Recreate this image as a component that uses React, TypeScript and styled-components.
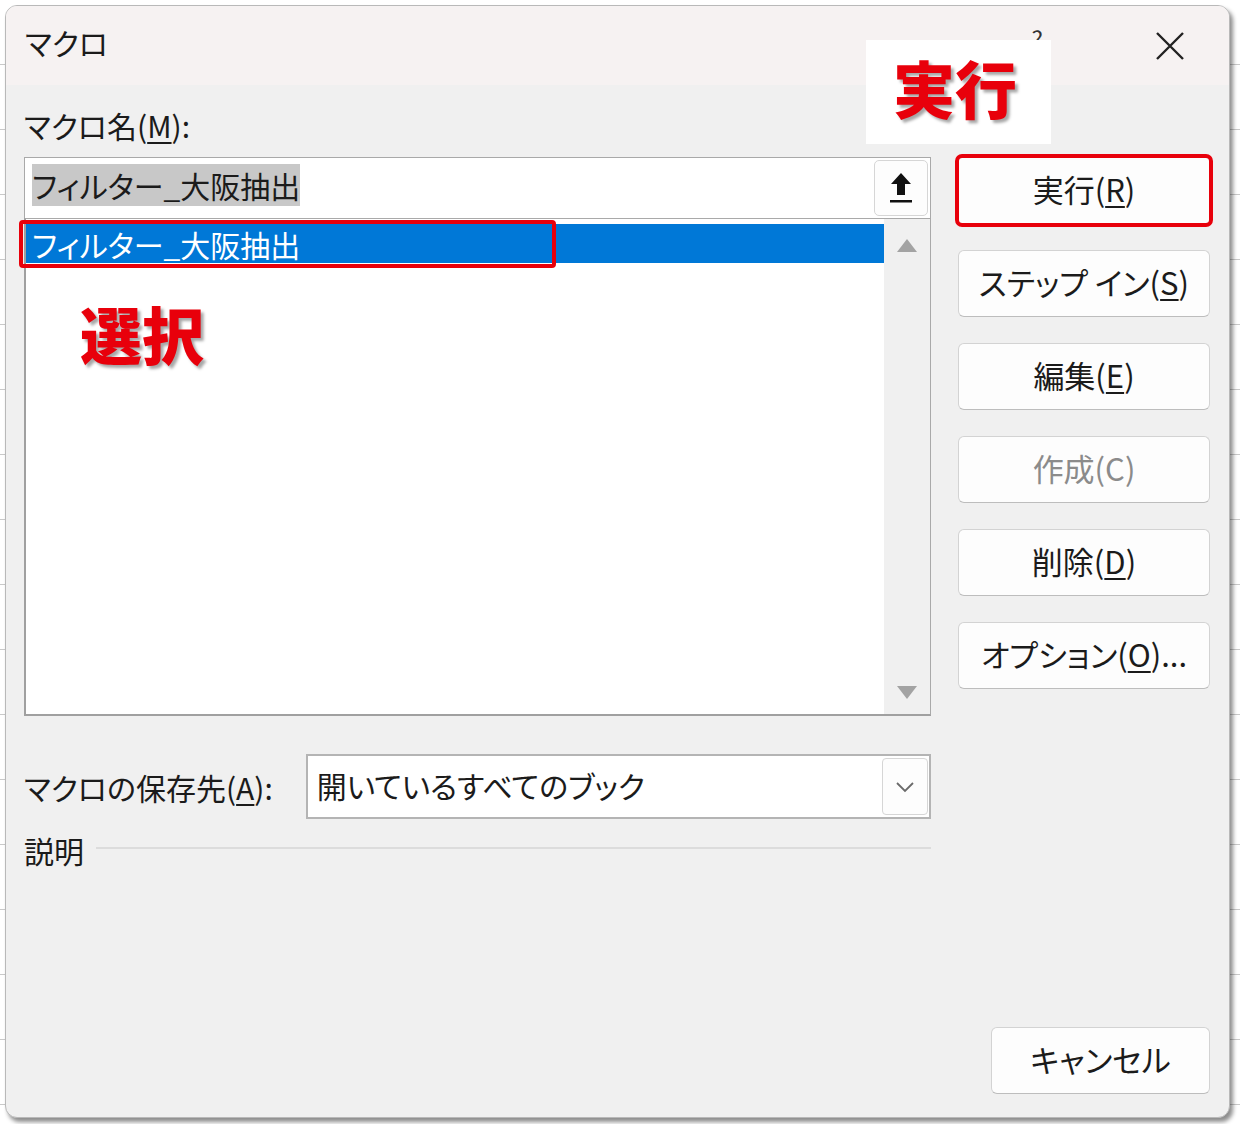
import React from 'react';
import styled, { createGlobalStyle } from 'styled-components';

const GlobalStyle = createGlobalStyle`
  html, body {
    margin: 0;
    padding: 0;
  }
  body {
    font-family: "Noto Sans CJK JP", "Noto Sans", sans-serif;
    font-feature-settings: "palt";
    color: #1b1b1b;
    width: 1240px;
    height: 1124px;
    overflow: hidden;
    background-color: #ffffff;
    background-image:
      repeating-linear-gradient(to bottom, transparent 0, transparent 64px, #c9c9c9 64px, #c9c9c9 65px);
  }
`;

const Page = styled.div`
  width: 1240px;
  height: 1124px;
  padding: 5px 0 0 5px;
  box-sizing: border-box;
`;

const Dialog = styled.div`
  position: relative;
  width: 1225px;
  height: 1113px;
  display: flex;
  flex-direction: column;
  background: #f0f0f0;
  border: 1px solid #b9b9b9;
  border-radius: 12px;
  box-shadow: 3px 4px 4px rgba(0, 0, 0, 0.45);
  box-sizing: border-box;
  overflow: hidden;
`;

const TitleBar = styled.div`
  height: 79px;
  flex-shrink: 0;
  display: flex;
  align-items: center;
  padding: 0 44px 0 19px;
  background: #f6f2f2;
`;

const Title = styled.span`
  font-size: 30px;
  margin-top: -8px;
  flex: 1;
`;

const Help = styled.span`
  font-size: 24px;
  color: #333;
  margin-right: 112px;
  margin-top: -14px;
`;

const Body = styled.div`
  flex: 1;
  display: grid;
  grid-template-columns: 907px 252px;
  column-gap: 27px;
  padding: 20px 19px 23px 18px;
`;

const LeftCol = styled.div`
  display: flex;
  flex-direction: column;
`;

const Label = styled.div`
  font-size: 30px;
  line-height: 40px;
  white-space: nowrap;
`;

const U = styled.span`
  text-decoration: underline;
  text-underline-offset: 4px;
  text-decoration-thickness: 2px;
`;

const NameLabel = styled(Label)`
  margin-bottom: 12px;
`;

const NameInput = styled.div`
  height: 61px;
  box-sizing: border-box;
  background: #ffffff;
  border: 1px solid #a9a9a9;
  border-bottom: none;
  display: flex;
  align-items: center;
  padding: 0 2px 0 7px;
`;

const InputText = styled.span<{ $selected?: boolean }>`
  font-size: 30px;
  line-height: 42px;
  background: ${p => (p.$selected ? '#c8c8c8' : 'transparent')};
  color: #1b1b1b;
  margin-top: -6px;
`;

const Spacer = styled.div`
  flex: 1;
`;

const IconButton = styled.div`
  width: 54px;
  height: 56px;
  box-sizing: border-box;
  background: #fdfdfd;
  border: 1px solid #d6d6d6;
  border-radius: 5px;
  display: flex;
  align-items: center;
  justify-content: center;
`;

const ListBox = styled.div`
  height: 498px;
  box-sizing: border-box;
  background: #ffffff;
  border: 1px solid #a9a9a9;
  border-left: 2px solid #a0a0a0;
  border-bottom: 2px solid #a0a0a0;
  display: flex;
`;

const ListItems = styled.div`
  flex: 1;
  padding-top: 5px;
`;

const ListRow = styled.div<{ $selected?: boolean }>`
  height: 39px;
  display: flex;
  align-items: center;
  padding-left: 6px;
  font-size: 30px;
  background: ${p => (p.$selected ? '#0078d7' : 'transparent')};
  color: ${p => (p.$selected ? '#ffffff' : '#1b1b1b')};
`;

const ScrollBar = styled.div`
  width: 46px;
  background: #f0f0f0;
  display: flex;
  flex-direction: column;
  align-items: center;
  justify-content: space-between;
  padding: 20px 0 15px;
`;

const Triangle = styled.div<{ $down?: boolean }>`
  width: 0;
  height: 0;
  border-left: 10px solid transparent;
  border-right: 10px solid transparent;
  ${p =>
    p.$down
      ? 'border-top: 13px solid #a3a3a3;'
      : 'border-bottom: 13px solid #a3a3a3;'}
`;

const StoreRow = styled.div`
  display: flex;
  align-items: center;
  margin-top: 38px;
  gap: 33px;
`;

const Select = styled.div`
  flex: 1;
  height: 65px;
  box-sizing: border-box;
  background: #ffffff;
  border: 2px solid #b4b4b4;
  display: flex;
  align-items: center;
  padding: 0 1px 0 9px;
`;

const SelectText = styled.span`
  flex: 1;
  font-size: 30px;
  margin-top: -4px;
`;

const ChevronBox = styled.div`
  width: 46px;
  height: 57px;
  box-sizing: border-box;
  border: 1px solid #d6d6d6;
  border-radius: 4px;
  background: #fdfdfd;
  display: flex;
  align-items: center;
  justify-content: center;
`;

const DescRow = styled.div`
  display: flex;
  align-items: center;
  gap: 12px;
  margin-top: 11px;
`;

const Rule = styled.div`
  flex: 1;
  height: 2px;
  background: #dcdcdc;
  margin-top: -4px;
`;

const RightCol = styled.div`
  display: flex;
  flex-direction: column;
  gap: 26px;
  padding-top: 52px;
`;

const Button = styled.div<{ $disabled?: boolean; $highlight?: boolean }>`
  height: 67px;
  box-sizing: border-box;
  background: #fdfdfd;
  border: 1px solid #d3d3d3;
  border-bottom-color: #bdbdbd;
  border-radius: 6px;
  display: flex;
  align-items: center;
  justify-content: center;
  font-size: 31px;
  color: ${p => (p.$disabled ? '#8b8b8b' : '#1b1b1b')};
  white-space: nowrap;
  padding-bottom: 4px;
  ${p =>
    p.$highlight &&
    `
    outline: 4px solid #e8000b;
    outline-offset: -1px;
    border-radius: 4px;
  `}
`;

const CancelButton = styled(Button)`
  margin-top: auto;
  width: 219px;
  align-self: flex-end;
`;

const RowMark = styled.div`
  position: absolute;
  left: 13px;
  top: 214px;
  width: 537px;
  height: 48px;
  box-sizing: border-box;
  border: 4px solid #e8000b;
  border-radius: 4px;
`;

const Callout = styled.div<{ $boxed?: boolean }>`
  position: absolute;
  font-size: 62px;
  font-weight: 900;
  color: #e8000b;
  text-shadow: 3px 3px 3px rgba(0, 0, 0, 0.35);
  line-height: 1;
  ${p => (p.$boxed ? 'background: #ffffff;' : '')}
`;

const RunCallout = styled(Callout)`
  left: 860px;
  top: 34px;
  width: 185px;
  height: 104px;
  box-sizing: border-box;
  padding: 16px 0 0 27px;
`;

const SelectCallout = styled(Callout)`
  left: 74px;
  top: 296px;
`;

const UploadIcon = () => (
  <svg width="26" height="34" viewBox="0 0 26 34">
    <path d="M13 2 L23 13 L17 13 L17 24 L9 24 L9 13 L3 13 Z" fill="#111" />
    <rect x="2" y="29" width="22" height="2.5" fill="#111" />
  </svg>
);

const Chevron = () => (
  <svg width="20" height="12" viewBox="0 0 20 12">
    <path d="M2 2 L10 10 L18 2" fill="none" stroke="#6a6a6a" strokeWidth="1.8" />
  </svg>
);

const CloseIcon = () => (
  <svg width="30" height="30" viewBox="0 0 30 30">
    <path d="M2 2 L28 28 M28 2 L2 28" stroke="#222" strokeWidth="2.4" />
  </svg>
);

const buttons: { label: React.ReactNode; disabled?: boolean; highlight?: boolean }[] = [
  { label: <>実行(<U>R</U>)</>, highlight: true },
  { label: <>ステップ イン(<U>S</U>)</> },
  { label: <>編集(<U>E</U>)</> },
  { label: <>作成(C)</>, disabled: true },
  { label: <>削除(<U>D</U>)</> },
  { label: <>オプション(<U>O</U>)...</> },
];

export default function App() {
  return (
    <Page>
      <GlobalStyle />
      <Dialog>
        <TitleBar>
          <Title>マクロ</Title>
          <Help>?</Help>
          <CloseIcon />
        </TitleBar>
        <Body>
          <LeftCol>
            <NameLabel>マクロ名(<U>M</U>):</NameLabel>
            <NameInput>
              <InputText $selected>フィルター_大阪抽出</InputText>
              <Spacer />
              <IconButton>
                <UploadIcon />
              </IconButton>
            </NameInput>
            <ListBox>
              <ListItems>
                <ListRow $selected>フィルター_大阪抽出</ListRow>
              </ListItems>
              <ScrollBar>
                <Triangle />
                <Triangle $down />
              </ScrollBar>
            </ListBox>
            <StoreRow>
              <Label>マクロの保存先(<U>A</U>):</Label>
              <Select>
                <SelectText>開いているすべてのブック</SelectText>
                <ChevronBox>
                  <Chevron />
                </ChevronBox>
              </Select>
            </StoreRow>
            <DescRow>
              <Label>説明</Label>
              <Rule />
            </DescRow>
          </LeftCol>
          <RightCol>
            {buttons.map((b, i) => (
              <Button key={i} $disabled={b.disabled} $highlight={b.highlight}>
                {b.label}
              </Button>
            ))}
            <CancelButton>キャンセル</CancelButton>
          </RightCol>
        </Body>
        <RowMark />
        <RunCallout $boxed>実行</RunCallout>
        <SelectCallout>選択</SelectCallout>
      </Dialog>
    </Page>
  );
}
